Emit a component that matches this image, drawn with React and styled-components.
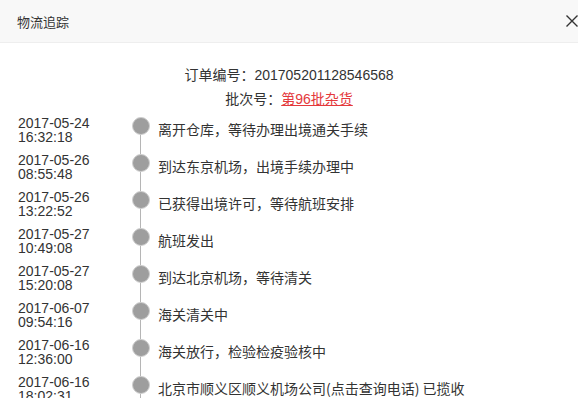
import React from "react";
import styled, { createGlobalStyle } from "styled-components";

const GlobalStyle = createGlobalStyle`
  html, body {
    margin: 0;
    padding: 0;
    background: #fff;
    overflow: hidden;
  }
  body {
    font-family: "Liberation Sans", "Noto Sans CJK SC", sans-serif;
    color: #333;
  }
`;

const traces = [
  { date: "2017-05-24", time: "16:32:18", text: "离开仓库，等待办理出境通关手续" },
  { date: "2017-05-26", time: "08:55:48", text: "到达东京机场，出境手续办理中" },
  { date: "2017-05-26", time: "13:22:52", text: "已获得出境许可，等待航班安排" },
  { date: "2017-05-27", time: "10:49:08", text: "航班发出" },
  { date: "2017-05-27", time: "15:20:08", text: "到达北京机场，等待清关" },
  { date: "2017-06-07", time: "09:54:16", text: "海关清关中" },
  { date: "2017-06-16", time: "12:36:00", text: "海关放行，检验检疫验核中" },
  { date: "2017-06-16", time: "18:02:31", text: "北京市顺义区顺义机场公司(点击查询电话) 已揽收" },
];

function App() {
  return (
    <Dialog>
      <GlobalStyle />
      <Header>
        <Title>物流追踪</Title>
        <Close aria-label="close">
          <svg width="12" height="12" viewBox="0 0 12 12">
            <path d="M0.5 0.5L11.5 11.5M11.5 0.5L0.5 11.5" stroke="#333" strokeWidth="1.4" fill="none" />
          </svg>
        </Close>
      </Header>
      <Info>
        <InfoLine>订单编号：201705201128546568</InfoLine>
        <InfoLine>
          批次号：<BatchLink href="#">第96批杂货</BatchLink>
        </InfoLine>
      </Info>
      <Timeline>
        {traces.map((t, i) => (
          <Row key={i}>
            <When>
              <span>{t.date}</span>
              <span>{t.time}</span>
            </When>
            <Marker first={i === 0}>
              <Dot />
            </Marker>
            <Desc>{t.text}</Desc>
          </Row>
        ))}
      </Timeline>
    </Dialog>
  );
}

export default App;

const Dialog = styled.div`
  width: 578px;
  height: 398px;
  overflow: hidden;
  background: #fff;
`;

const Header = styled.div`
  height: 42px;
  display: flex;
  align-items: center;
  justify-content: space-between;
  padding-left: 17px;
  background: #f8f8f8;
  border-bottom: 1px solid #eeeeee;
`;

const Title = styled.div`
  font-family: "Noto Sans CJK SC", sans-serif;
  font-size: 13px;
  color: #333;
`;

const Close = styled.div`
  width: 12px;
  height: 12px;
  display: flex;
  cursor: pointer;
`;

const Info = styled.div`
  padding-top: 20px;
  display: flex;
  flex-direction: column;
  align-items: center;
`;

const InfoLine = styled.div`
  line-height: 24px;
  font-size: 14px;
  color: #333;
  font-family: "Liberation Sans", "Noto Sans CJK SC", sans-serif;
`;

const BatchLink = styled.a`
  color: #e4393c;
  text-decoration: underline;
`;

const Timeline = styled.div`
  margin-top: 2px;
  padding-left: 18px;
`;

const Row = styled.div`
  display: grid;
  grid-template-columns: 106px 18px 1fr;
  column-gap: 8px;
  height: 37px;
`;

const When = styled.div`
  display: flex;
  flex-direction: column;
  padding-top: 3px;
  font-size: 14px;
  line-height: 14px;
  color: #333;
`;

const Marker = styled.div`
  position: relative;
  &::before {
    content: "";
    position: absolute;
    left: 8px;
    width: 1px;
    top: ${(p) => (p.first ? "13px" : "0")};
    bottom: 0;
    background: #b5b5b5;
  }
`;

const Dot = styled.div`
  position: relative;
  margin-top: 4px;
  width: 16px;
  height: 16px;
  border-radius: 50%;
  background: #9e9e9e;
  border: 1px solid #cfcfcf;
`;

const Desc = styled.div`
  padding-top: 6px;
  font-family: "Noto Sans CJK SC", sans-serif;
  font-size: 14px;
  line-height: 20px;
  color: #333;
  white-space: nowrap;
`;
